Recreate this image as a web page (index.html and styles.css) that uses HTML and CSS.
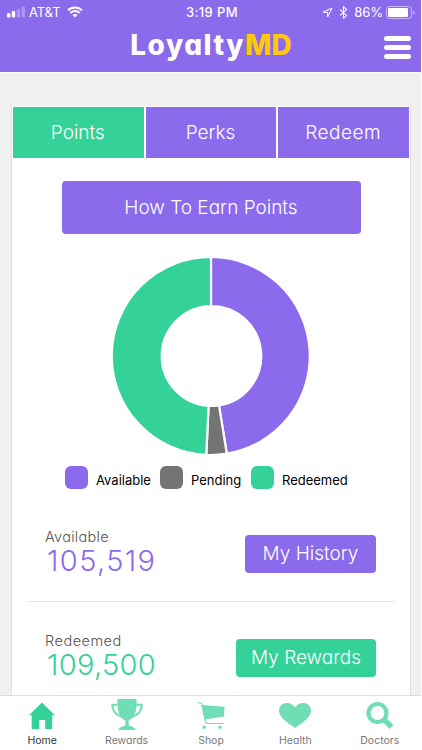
FILE: index.html
```html
<!DOCTYPE html>
<html lang="en">
<head>
	<meta charset="UTF-8">
	<meta name="viewport" content="width=device-width, initial-scale=1">
	<title>LoyaltyMD</title>
	<link rel="stylesheet" href="styles.css">
</head>
<body>
	<div class="app">
		<header class="header">
			<div class="status">
				<div class="status-left">
					<svg class="signal" width="18" height="12" viewBox="0 0 18 12" fill="#fff">
						<rect x="0" y="7" width="3.4" height="4.5" rx="1"/>
						<rect x="4.8" y="5" width="3.4" height="6.5" rx="1"/>
						<rect x="9.7" y="3" width="3.4" height="8.5" rx="1" opacity=".3"/>
						<rect x="14.5" y="0.5" width="3.4" height="11" rx="1" opacity=".3"/>
					</svg>
					<span class="carrier">AT&amp;T</span>
					<svg class="wifi" width="16" height="12" viewBox="0 0 16 12" fill="none" stroke="#fff" stroke-width="2">
						<path d="M0.9 4.4a10.3 10.3 0 0 1 14.2 0"/>
						<path d="M3.3 7a6.8 6.8 0 0 1 9.4 0"/>
						<path d="M8 11.6L5.5 9.1a3.6 3.6 0 0 1 5 0z" fill="#fff" stroke="none"/>
					</svg>
				</div>
				<span class="time">3:19 PM</span>
				<div class="status-right">
					<svg width="11" height="11" viewBox="0 0 11 11" fill="none" stroke="#fff" stroke-width="1"><path d="M10 1L0.9 5.3H5.7V10z"/></svg>
					<svg class="bluetooth" width="9" height="13" viewBox="0 0 9 13" fill="none" stroke="#fff" stroke-width="1.1"><path d="M1 3.6l6.6 5.8-3.1 2.9V0.7l3.1 2.9L1 9.4"/></svg>
					<span class="percent">86%</span>
					<svg class="battery" width="29" height="13" viewBox="0 0 29 13">
						<rect x="0.5" y="0.5" width="25" height="12" rx="3" fill="none" stroke="#fff" stroke-opacity=".5"/>
						<rect x="2" y="2" width="20" height="9" rx="1.2" fill="#fff"/>
						<path d="M27 4.4q1.6.5 1.6 2.1T27 8.6z" fill="#fff" opacity=".5"/>
					</svg>
				</div>
			</div>
			<div class="bar">
				<div class="logo"><span class="logo-loyalty">Loyalty</span><span class="logo-md">MD</span></div>
				<div class="menu"><i></i><i></i><i></i></div>
			</div>
		</header>

		<main class="card">
			<nav class="tabs">
				<a class="tab active">Points</a>
				<a class="tab">Perks</a>
				<a class="tab tab-redeem">Redeem</a>
			</nav>
			<a class="btn btn-earn">How To Earn Points</a>

			<svg class="chart" width="200" height="200" viewBox="-100 -100 200 200" stroke="#fff" stroke-width="2.2">
				<path fill="#8b6aeb" d="M0-99A99 99 0 0 1 15.8 97.7L8 49.4A50 50 0 0 0 0-50z"/>
				<path fill="#747474" d="M15.8 97.7A99 99 0 0 1-4.7 98.9L-2.4 49.9A50 50 0 0 0 8 49.4z"/>
				<path fill="#34d198" d="M-4.7 98.9A99 99 0 0 1 0-99V-50A50 50 0 0 0-2.4 49.9z"/>
			</svg>

			<ul class="legend">
				<li class="l-available"><i class="swatch purple"></i><span>Available</span></li>
				<li class="l-pending"><i class="swatch grey"></i><span>Pending</span></li>
				<li class="l-redeemed"><i class="swatch green"></i><span>Redeemed</span></li>
			</ul>

			<section class="row">
				<div>
					<div class="label label-available">Available</div>
					<div class="amount amount-available">105,519</div>
				</div>
				<a class="btn btn-history">My History</a>
			</section>
			<section class="row row-redeemed">
				<div>
					<div class="label label-redeemed">Redeemed</div>
					<div class="amount amount-redeemed">109,500</div>
				</div>
				<a class="btn btn-rewards">My Rewards</a>
			</section>
		</main>

		<footer class="footer">
			<a class="item current">
				<svg width="34" height="32" viewBox="0 0 34 32"><path d="M17 5.5L30 18.3H27.2V32H20.2V23H14.3V32H6.7V18.3H4z"/></svg>
				<span>Home</span>
			</a>
			<a class="item">
				<svg width="34" height="34" viewBox="0 0 34 34"><path d="M7.5 3h19v5c0 9-3 14.8-7.8 16.2v5.3c2.6.8 5.800 1.4 7 4.500H8.300c1.200-3.100 4.400-3.700 7-4.500v-5.300C10.500 22.800 7.500 17 7.500 8z"/><path d="M7.800 8.800H2.300c.1 6.300 4 11 10.700 12.200M26.200 8.800H31.700c-.1 6.300-4 11-10.700 12.200" fill="none" stroke="#6fdeb5" stroke-width="2.100"/></svg>
				<span>Rewards</span>
			</a>
			<a class="item">
				<svg width="34" height="32" viewBox="0 0 34 32"><path d="M7.500 8L30.500 9.800 30 19.500 10.500 22.500z"/><path d="M3.500 5.500l4.100.9 4 18.600q.3 1.500 1.800 1.500H29.500" fill="none" stroke="#6fdeb5" stroke-width="1.200"/><circle cx="10.300" cy="30.300" r="1.700"/><circle cx="26" cy="30.300" r="1.700"/></svg>
				<span>Shop</span>
			</a>
			<a class="item">
				<svg width="34" height="32" viewBox="0 0 34 32"><path d="M17 31C9 25 1 20.500 1 13.500 1 5 12.500 3.200 17 10.200 21.500 3.200 33 5 33 13.500 33 20.500 25 25 17 31z"/></svg>
				<span>Health</span>
			</a>
			<a class="item">
				<svg width="34" height="32" viewBox="0 0 34 32"><circle cx="14.500" cy="16" r="9" fill="none" stroke="#6fdeb5" stroke-width="4.200"/><path d="M20.500 22L28.500 30" stroke="#6fdeb5" stroke-width="5.500"/></svg>
				<span>Doctors</span>
			</a>
		</footer>
	</div>
</body>
</html>
```
FILE: styles.css
```css
* {
	box-sizing: border-box;
}
body {
	margin: 0;
	background: #fff;
	font-family: Inter, "Liberation Sans", sans-serif;
	font-feature-settings: "cv11";
	font-weight: 300;
}
svg {
	display: block;
}
.app {
	width: 421px;
	height: 750px;
	background: #f0f0f0;
	display: flex;
	flex-direction: column;
	overflow: hidden;
}

/* header */
.header {
	height: 73px;
	flex: none;
	background: #8b6aeb;
	border-bottom: 1px solid #fff;
	color: #fff;
}
.status {
	height: 24px;
	padding: 0 6px 0 7px;
	display: grid;
	grid-template-columns: 1fr auto 1fr;
	align-items: center;
	font-size: 13px;
	font-weight: 400;
	font-feature-settings: normal;
}
.status-left,
.status-right {
	display: flex;
	align-items: center;
}
.status-right {
	justify-content: flex-end;
}
.carrier {
	margin-left: 4px;
	letter-spacing: -0.1px;
}
.wifi {
	margin-left: 7px;
}
.time {
	margin-left: 2px;
	font-weight: 500;
	letter-spacing: 0.4px;
}
.bluetooth {
	margin-left: 6px;
}
.percent {
	margin: 0 3px 0 6px;
}
.bar {
	height: 48px;
	display: grid;
	grid-template-columns: 1fr auto 1fr;
}
.logo {
	grid-column: 2;
	padding-left: 1px;
	font-size: 28px;
	font-weight: 800;
	line-height: 43px;
}
.logo-loyalty {
	letter-spacing: 1.5px;
}
.logo-md {
	color: #ffc80a;
}
.menu {
	justify-self: end;
	width: 27px;
	margin: 12px 10px 0 0;
	display: flex;
	flex-direction: column;
	gap: 4px;
}
.menu i {
	height: 5px;
	border-radius: 3px;
	background: #fff;
}

/* card */
.card {
	width: 400px;
	height: 589px;
	margin: 33px 0 0 11px;
	flex: none;
	padding: 1px 2px 0;
	background: #fff;
	border: solid #e0e0e0;
	border-width: 0 1px;
	display: flex;
	flex-direction: column;
}
.tabs {
	display: grid;
	grid-template-columns: repeat(3, 1fr);
	gap: 2px;
	margin: 0 -1px;
}
.tab {
	height: 51px;
	padding-right: 1px;
	line-height: 51px;
	background: #8b6aeb;
	color: #fff;
	font-size: 19px;
	text-align: center;
}
.tab.active {
	background: #34d198;
}
.tab-redeem {
	letter-spacing: 0.5px;
}
.btn {
	flex: none;
	border-radius: 4px;
	background: #8b6aeb;
	color: #fff;
	font-size: 19px;
	text-align: center;
	white-space: nowrap;
}
.btn-earn {
	width: 299px;
	height: 53px;
	margin: 23px auto 0;
	line-height: 54px;
}
.chart {
	flex: none;
	margin: 22px auto 0;
}
.legend {
	list-style: none;
	margin: 10px 0 0 51px;
	padding: 0;
	display: flex;
	color: #000;
	font-size: 13px;
	font-weight: 400;
	font-feature-settings: normal;
}
.legend li {
	display: flex;
	gap: 8px;
	height: 23px;
	line-height: 28px;
}
.l-available {
	width: 95px;
}
.l-pending {
	width: 91px;
}
.swatch {
	width: 23px;
	height: 23px;
	border-radius: 6px;
}
.purple {
	background: #8b6aeb;
}
.grey {
	background: #747474;
}
.green {
	background: #34d198;
}
.row {
	height: 104px;
	flex: none;
	margin: 8px 13px 0;
	padding: 30px 19px 0 18px;
	display: flex;
	justify-content: space-between;
}
.row-redeemed {
	margin-top: 0;
	border-top: 1px solid #e2e2e2;
	padding-top: 29px;
}
.label {
	color: #555;
	font-size: 14.5px;
	line-height: 20px;
}
.label-available {
	letter-spacing: 0.3px;
}
.label-redeemed {
	letter-spacing: 0.5px;
}
.amount {
	margin-left: 2px;
	font-size: 29px;
	line-height: 28px;
}
.amount-available {
	color: #8b6aeb;
	letter-spacing: 1.4px;
}
.amount-redeemed {
	color: #34d198;
	letter-spacing: 0.3px;
}
.btn-history,
.btn-rewards {
	height: 38px;
	line-height: 38px;
	margin-top: 8px;
}
.btn-history {
	width: 131px;
}
.btn-rewards {
	width: 140px;
	background: #34d198;
}

/* bottom navigation */
.footer {
	width: 422px;
	height: 55px;
	border-top: 1px solid #ddd;
	background: #fff;
	display: grid;
	grid-template-columns: repeat(5, 1fr);
}
.item {
	display: flex;
	flex-direction: column;
	align-items: center;
	color: #777;
	font-size: 10.5px;
	font-weight: 400;
}
.item svg {
	height: 34px;
	fill: #6fdeb5;
}
.item span {
	margin-top: 3px;
	line-height: 15px;
}
.current {
	color: #333;
}
.item.current svg {
	fill: #34d198;
}
```
